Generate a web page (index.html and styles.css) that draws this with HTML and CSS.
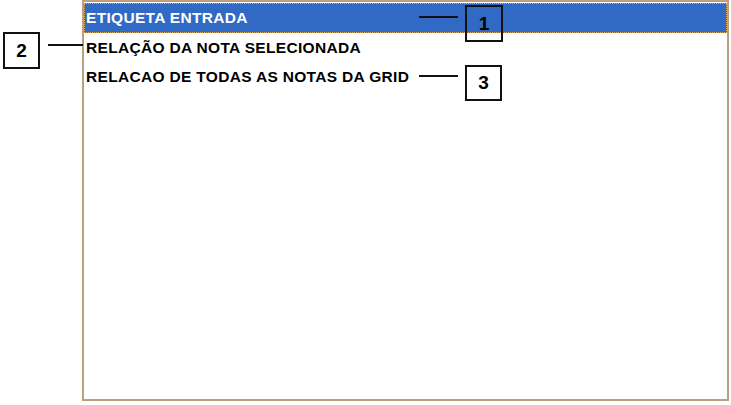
FILE: index.html
```html
<!DOCTYPE html>
<html>
<head>
<meta charset="utf-8">
<link rel="stylesheet" href="styles.css">
</head>
<body>
<div class="stage">
  <div class="listbox">
    <div class="row selected">ETIQUETA ENTRADA</div>
    <div class="row">RELAÇÃO DA NOTA SELECIONADA</div>
    <div class="row">RELACAO DE TODAS AS NOTAS DA GRID</div>
  </div>
  <div class="callout c1">1</div>
  <div class="leader l1"></div>
  <div class="callout c2">2</div>
  <div class="leader l2"></div>
  <div class="callout c3">3</div>
  <div class="leader l3"></div>
</div>
</body>
</html>
```
FILE: styles.css
```css
html, body {
  margin: 0;
  padding: 0;
  background: #ffffff;
}
.stage {
  position: relative;
  width: 731px;
  height: 405px;
  overflow: hidden;
}
.listbox {
  box-sizing: border-box;
  margin-left: 82px;
  width: 647px;
  height: 401px;
  border: 2px solid #bc9f7e;
  padding-top: 1px;
  background: #ffffff;
  font-family: "Liberation Sans", Arial, sans-serif;
  font-weight: bold;
  font-size: 15.5px;
  letter-spacing: 0.32px;
  color: #000000;
}
.row {
  box-sizing: border-box;
  height: 29.5px;
  line-height: 29.5px;
  padding-left: 2px;
  white-space: nowrap;
}
.row.selected {
  background: #316ac5;
  color: #ffffff;
  outline: 1px dotted #d9a860;
  outline-offset: -1px;
}
.callout {
  position: absolute;
  box-sizing: border-box;
  border: 2px solid #111111;
  font-family: "Liberation Sans", Arial, sans-serif;
  font-size: 19px;
  font-weight: bold;
  color: #000000;
  display: flex;
  align-items: center;
  justify-content: center;
}
.c1 { left: 465px; top: 5px; width: 38px; height: 37px; }
.c2 { left: 3px; top: 32px; width: 37px; height: 37px; }
.c3 { left: 465px; top: 65px; width: 37px; height: 36px; }
.leader {
  position: absolute;
  height: 2px;
  background: #111111;
}
.l1 { left: 419px; top: 16px; width: 39px; }
.l2 { left: 48px; top: 44px; width: 35px; }
.l3 { left: 419px; top: 75px; width: 39px; }
```
